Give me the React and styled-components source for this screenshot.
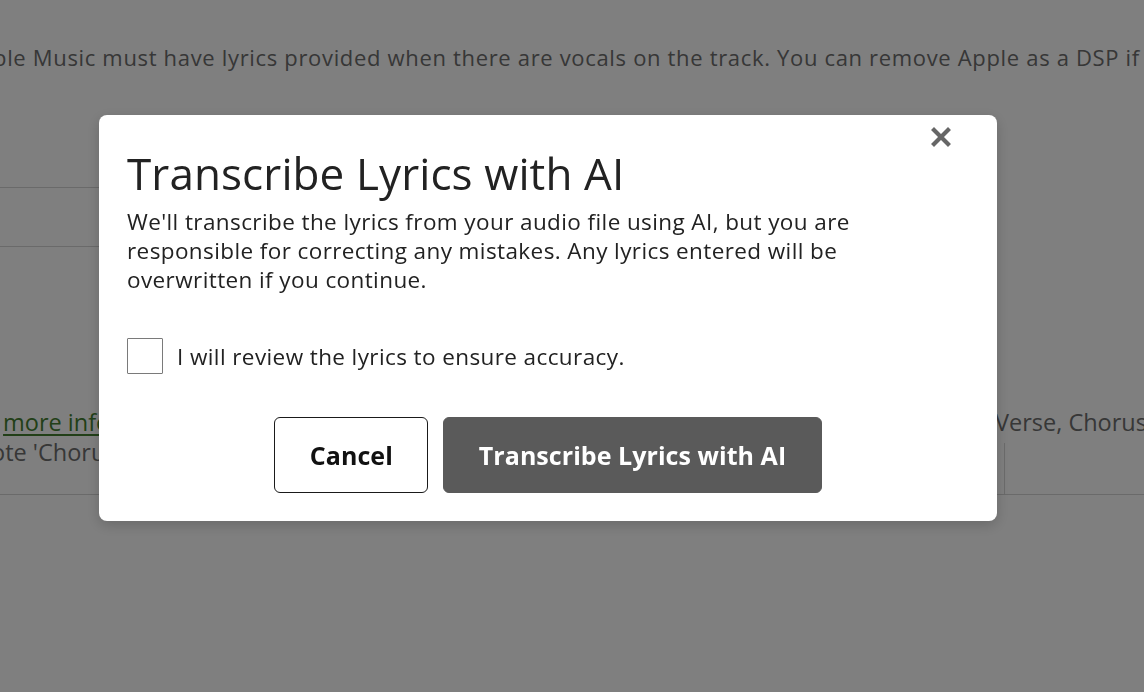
import React from "react";
import styled, { createGlobalStyle } from "styled-components";

const Global = createGlobalStyle`
  html, body { margin: 0; padding: 0; background: #fff; }
  body { font-family: "Open Sans", "Liberation Sans", sans-serif; overflow: hidden; }
  * { box-sizing: border-box; }
`;

const Page = styled.div`
  width: 1144px;
  height: 692px;
  overflow: hidden;
  color: #6e6e6e;
`;

const Notice = styled.p`
  margin: 43px 0 0;
  font-size: 22px;
  line-height: 28px;
  letter-spacing: 0.67px;
  white-space: nowrap;
  text-indent: -7px;
`;

const LeftTable = styled.div`
  width: 420px;
  margin-top: 116px;
`;

const TableRow = styled.div`
  height: 59px;
  border-top: 1px solid #d4d4d4;
`;

const Section = styled.div`
  margin-top: 102px;
  display: flex;
  justify-content: space-between;
  border-bottom: 1px solid #d4d4d4;
  height: 88px;
  font-size: 23.5px;
  line-height: 30px;
`;

const LeftCol = styled.div`
  margin-left: -9px;
  white-space: nowrap;
`;

const InfoLink = styled.a`
  color: #447f30;
  text-decoration: underline;
  text-underline-offset: 3px;
`;

const RightCol = styled.div`
  width: 150px;
  white-space: nowrap;
  display: flex;
  flex-direction: column;
`;

const RightText = styled.div`
  padding-left: 1px;
`;

const FieldEdge = styled.div`
  flex: 1;
  margin-top: 6px;
  width: 11px;
  border-right: 1px solid #d8d8d8;
`;

const Overlay = styled.div`
  position: fixed;
  inset: 0;
  background: rgba(0, 0, 0, 0.5);
  padding: 115px 0 0 99px;
`;

const Modal = styled.div`
  position: relative;
  width: 898px;
  background: #fff;
  border-radius: 8px;
  padding: 32px 28px 28px;
  color: #222;
  box-shadow: 0 4px 14px rgba(0, 0, 0, 0.18);
`;

const CloseButton = styled.button`
  position: absolute;
  top: 7px;
  right: 41px;
  width: 30px;
  height: 30px;
  padding: 0;
  border: 0;
  background: transparent;
  display: flex;
  align-items: center;
  justify-content: center;
  cursor: pointer;
`;

const Title = styled.h2`
  margin: 0 0 8px;
  font-size: 44px;
  line-height: 52px;
  font-weight: 400;
  letter-spacing: 0.1px;
`;

const Body = styled.p`
  margin: 0;
  font-size: 22.5px;
  line-height: 29px;
  letter-spacing: 0.4px;
  max-width: 760px;
`;

const CheckRow = styled.label`
  margin-top: 44px;
  display: flex;
  align-items: center;
  gap: 14px;
  font-size: 22.5px;
  line-height: 29px;
  letter-spacing: 0.4px;
`;

const CheckBox = styled.span`
  flex: none;
  width: 36px;
  height: 36px;
  border: 1px solid #7a7a7a;
  border-radius: 1px;
  background: #fff;
`;

const Actions = styled.div`
  margin-top: 43px;
  display: flex;
  justify-content: center;
  gap: 15px;
`;

const Button = styled.button`
  height: 76px;
  padding: 0 34.5px;
  border-radius: 6px;
  font-family: "Open Sans", "Liberation Sans", sans-serif;
  font-size: 25px;
  letter-spacing: 0.05px;
  font-weight: 700;
  border: 1px solid ${(p) => (p.$primary ? "#5a5a5a" : "#1a1a1a")};
  background: ${(p) => (p.$primary ? "#5a5a5a" : "#fff")};
  color: ${(p) => (p.$primary ? "#fff" : "#111")};
  cursor: pointer;
`;

export default function App() {
  return (
    <>
      <Global />
      <Page>
        <Notice>
          ple Music must have lyrics provided when there are vocals on the track. You can remove Apple as a DSP if you do not have lyrics.
        </Notice>
        <LeftTable>
          <TableRow />
          <TableRow />
        </LeftTable>
        <Section>
          <LeftCol>
            l <InfoLink>more info</InfoLink>
            <br />
            ote 'Chorus'
          </LeftCol>
          <RightCol>
            <RightText>Verse, Chorus</RightText>
            <FieldEdge />
          </RightCol>
        </Section>
      </Page>
      <Overlay>
        <Modal>
          <CloseButton aria-label="Close">
            <svg width="20" height="20" viewBox="0 0 20 20">
              <path d="M3 3 L17 17 M17 3 L3 17" stroke="#666" strokeWidth="4.2" strokeLinecap="square" />
            </svg>
          </CloseButton>
          <Title>Transcribe Lyrics with AI</Title>
          <Body>
            We'll transcribe the lyrics from your audio file using AI, but you are responsible for correcting any mistakes. Any lyrics entered will be overwritten if you continue.
          </Body>
          <CheckRow>
            <CheckBox />
            I will review the lyrics to ensure accuracy.
          </CheckRow>
          <Actions>
            <Button>Cancel</Button>
            <Button $primary>Transcribe Lyrics with AI</Button>
          </Actions>
        </Modal>
      </Overlay>
    </>
  );
}
